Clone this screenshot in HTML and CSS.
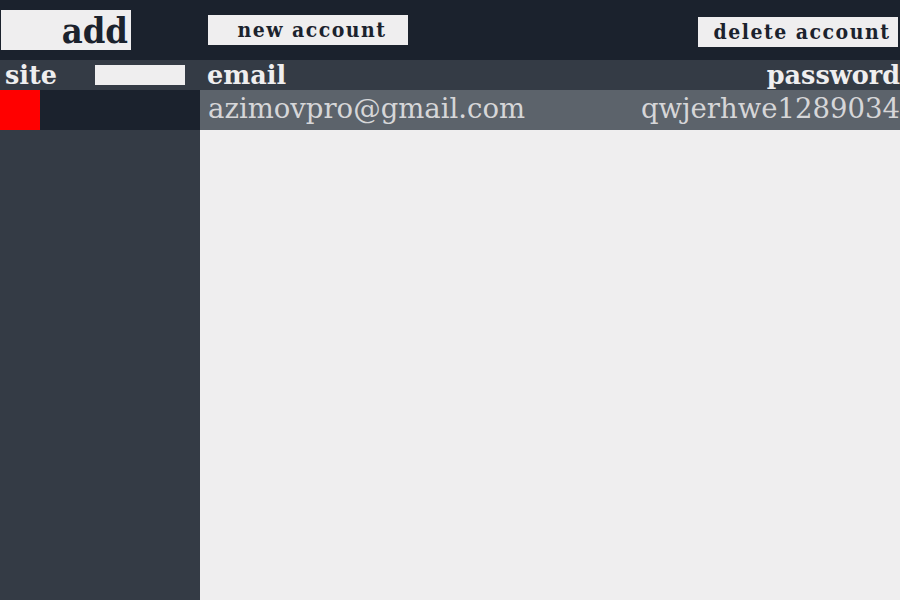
FILE: index.html
```html
<!DOCTYPE html>
<html>
<head>
<meta charset="utf-8">
<link rel="stylesheet" href="styles.css">
</head>
<body>
<header class="topbar">
  <div class="add-box">add</div>
  <div class="btn btn-new">new account</div>
  <div class="spacer"></div>
  <div class="btn btn-delete">delete account</div>
</header>
<div class="main">
  <aside class="sidebar">
    <div class="side-head">
      <span class="label">site</span>
      <div class="search"></div>
    </div>
    <div class="side-item">
      <div class="swatch"></div>
    </div>
  </aside>
  <section class="content">
    <div class="content-head">
      <span class="label">email</span>
      <span class="label">password</span>
    </div>
    <div class="row">
      <span>azimovpro@gmail.com</span>
      <span>qwjerhwe1289034</span>
    </div>
  </section>
</div>
</body>
</html>
```
FILE: styles.css
```css
* { box-sizing: border-box; }
html, body { margin: 0; padding: 0; height: 100%; }
body {
  width: 900px;
  height: 600px;
  display: flex;
  flex-direction: column;
  font-family: "DejaVu Serif Condensed", "DejaVu Serif", serif;
  background: #efeeef;
  overflow: hidden;
}
.topbar {
  height: 60px;
  background: #1b222d;
  display: flex;
  align-items: flex-start;
  flex-shrink: 0;
}
.add-box {
  width: 130px;
  height: 40px;
  margin: 10px 0 0 1px;
  background: #efeeef;
  color: #1b222d;
  font-weight: bold;
  font-size: 36px;
  line-height: 40px;
  text-align: right;
  padding-right: 3px;
}
.btn {
  width: 200px;
  height: 30px;
  background: #efeeef;
  color: #1b222d;
  font-weight: bold;
  font-size: 21px;
  line-height: 30px;
  text-align: center;
  letter-spacing: 1.5px;
  padding-left: 8px;
}
.btn-new { margin: 15px 0 0 77px; }
.btn-delete { margin: 17px 2px 0 0; }
.spacer { flex: 1; }
.main {
  flex: 1;
  display: flex;
}
.sidebar {
  width: 200px;
  background: #343b45;
  display: flex;
  flex-direction: column;
}
.side-head {
  height: 30px;
  display: flex;
  align-items: center;
  justify-content: space-between;
  padding: 0 15px 0 5px;
}
.label {
  color: #efeeef;
  font-family: "DejaVu Serif", serif;
  font-weight: bold;
  font-size: 25.5px;
  line-height: 30px;
}
.search {
  width: 90px;
  height: 20px;
  background: #efeeef;
}
.side-item {
  height: 40px;
  background: #1b222d;
  display: flex;
}
.swatch {
  width: 40px;
  height: 40px;
  background: #ff0000;
}
.content {
  flex: 1;
  display: flex;
  flex-direction: column;
}
.content-head {
  height: 30px;
  background: #343b45;
  display: flex;
  justify-content: space-between;
  padding-left: 7px;
}
.row {
  height: 40px;
  background: #5c636b;
  display: flex;
  justify-content: space-between;
  align-items: center;
  padding: 0 0 4px 8px;
  color: #d6d6d8;
  font-family: "DejaVu Serif", serif;
  font-size: 27.5px;
}
```
